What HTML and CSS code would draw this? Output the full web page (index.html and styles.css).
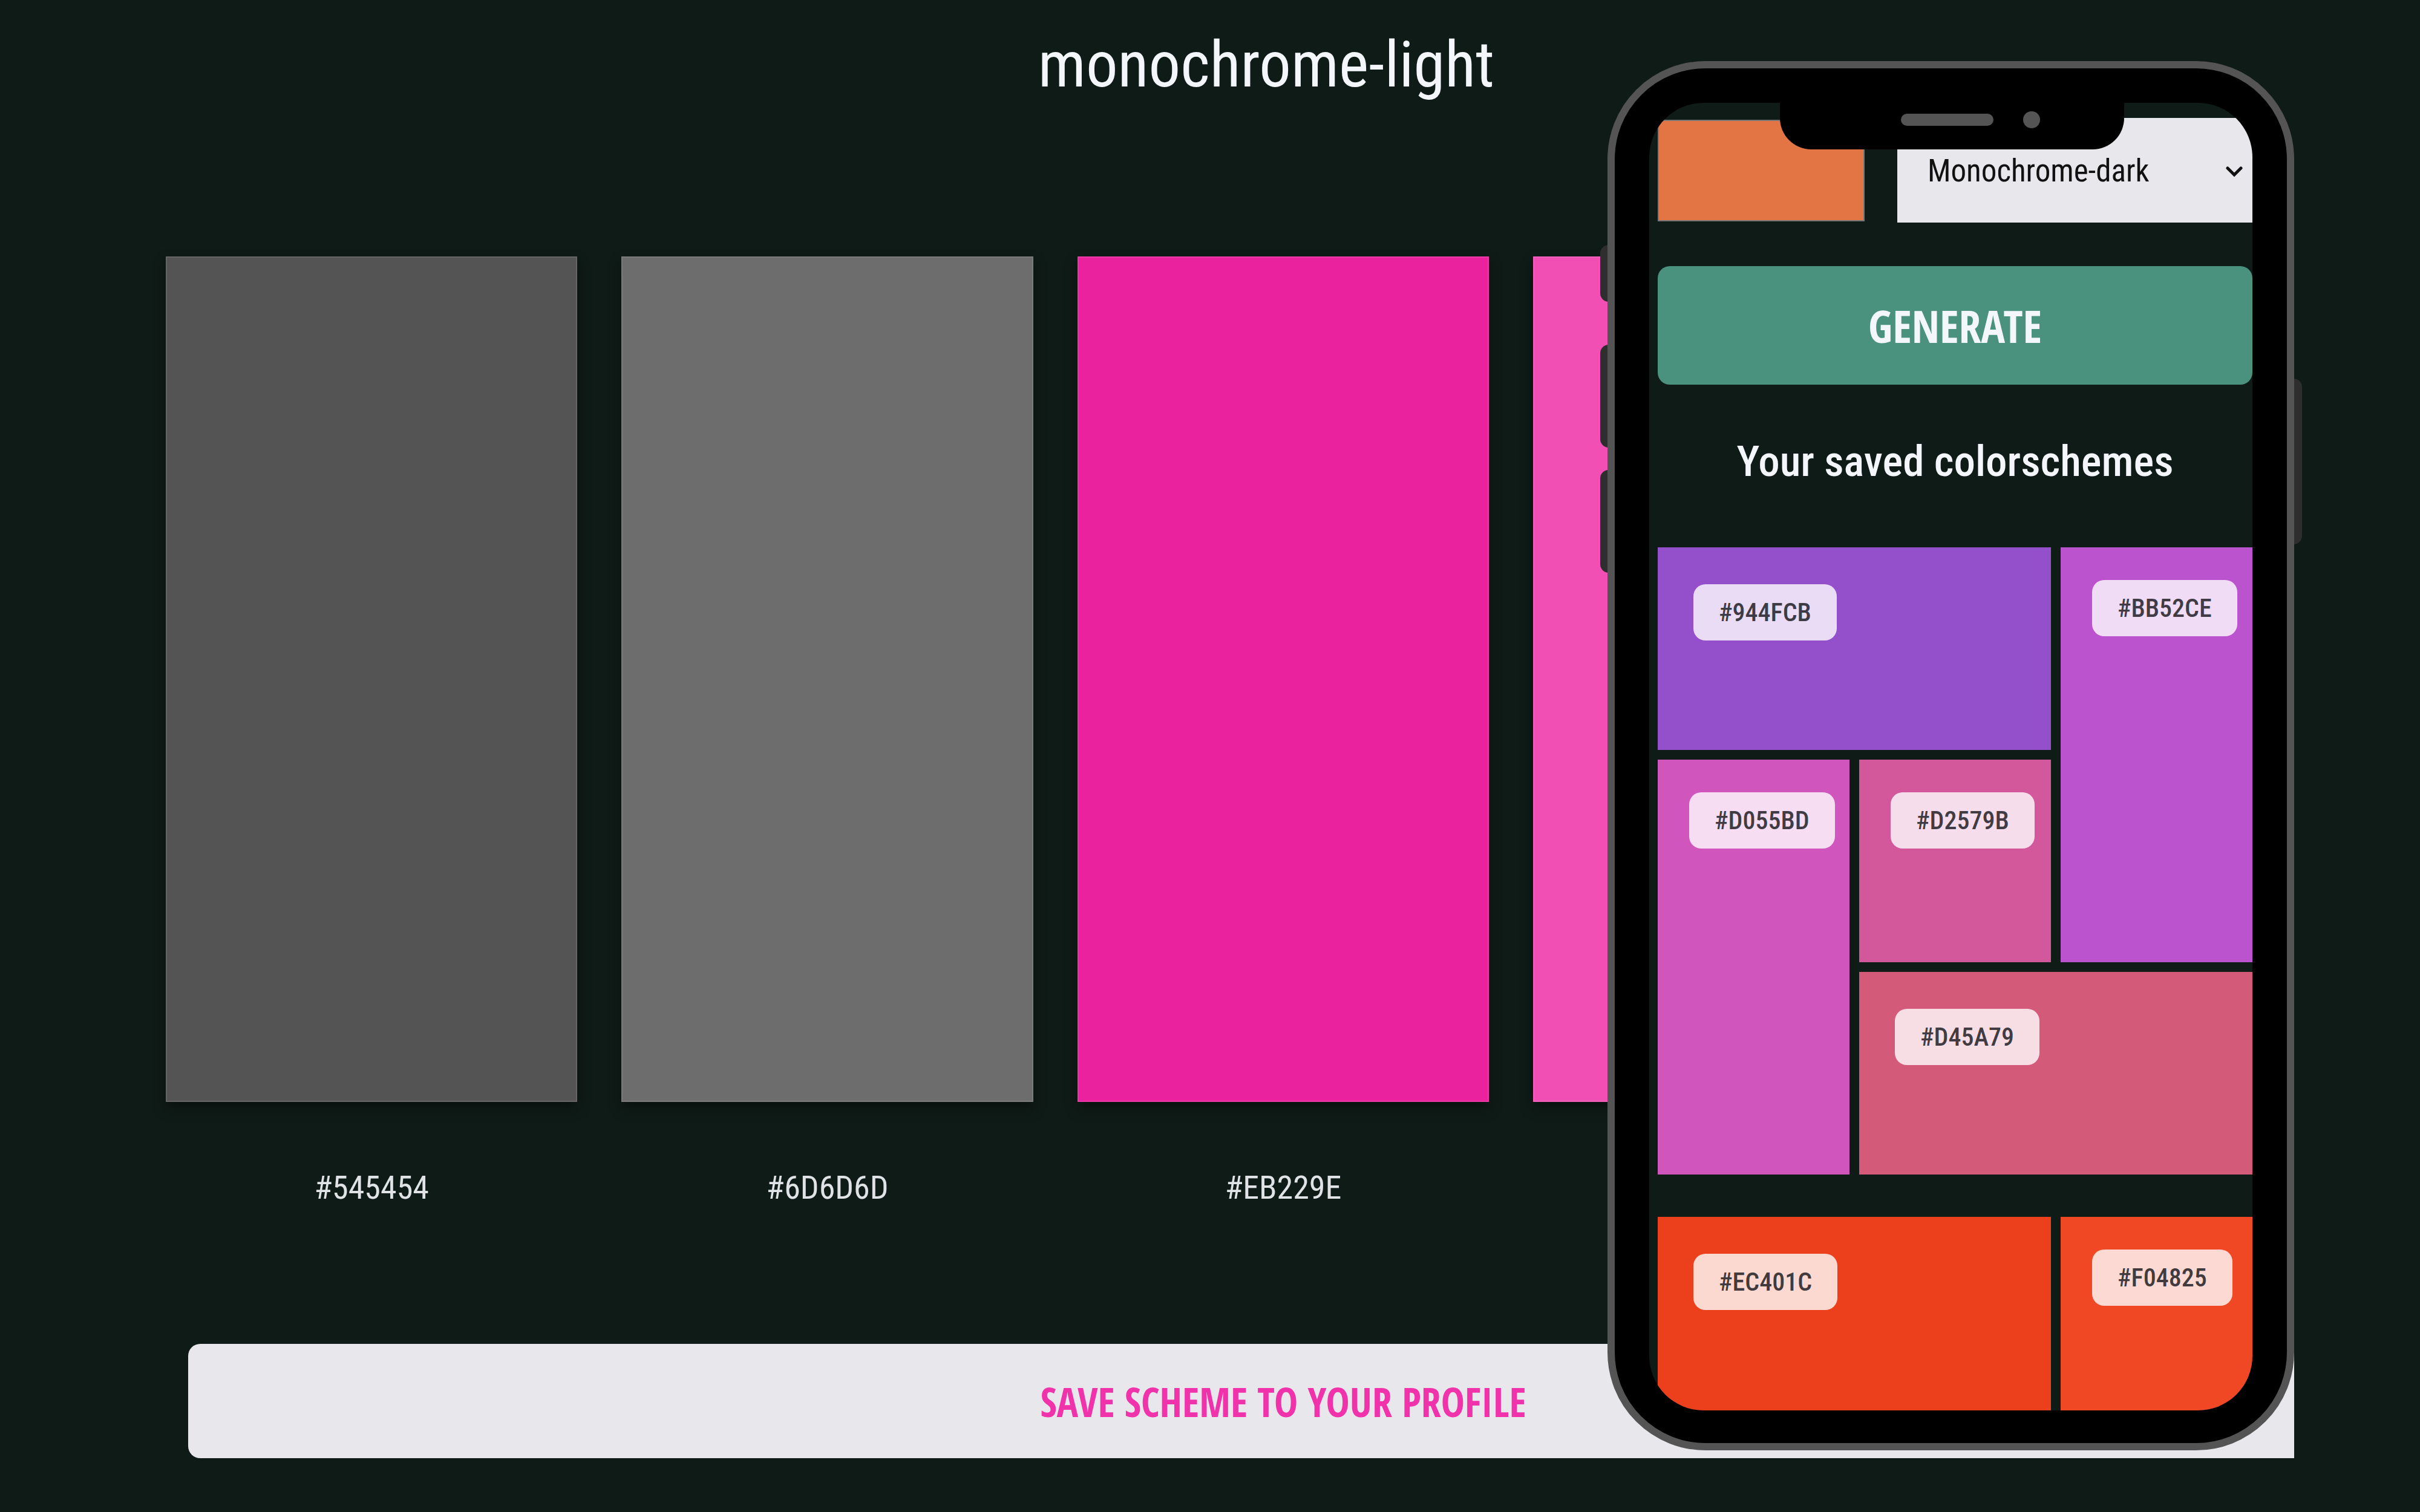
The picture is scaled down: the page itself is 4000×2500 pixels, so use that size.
FILE: index.html
```html
<!DOCTYPE html>
<html lang="en">
<head>
  <meta charset="utf-8">
  <meta name="viewport" content="width=device-width, initial-scale=1">
  <title>Color schemes</title>
  <link rel="stylesheet" href="styles.css">
</head>
<body>
  <div class="showcase">
    <main class="desktop">
      <div class="desktop-page">
        <h1 class="scheme-title">monochrome-light</h1>
        <ul class="swatches">
          <li class="swatch"><div class="swatch-color gray-dark"></div><p class="swatch-code">#545454</p></li>
          <li class="swatch"><div class="swatch-color gray-mid"></div><p class="swatch-code">#6D6D6D</p></li>
          <li class="swatch"><div class="swatch-color pink-deep"></div><p class="swatch-code">#EB229E</p></li>
          <li class="swatch"><div class="swatch-color pink-light"></div></li>
        </ul>
        <button class="save-button" type="button">SAVE SCHEME TO YOUR PROFILE</button>
      </div>
    </main>

    <aside class="phone">
      <span class="side-key key-mute"></span>
      <span class="side-key key-up"></span>
      <span class="side-key key-down"></span>
      <span class="side-key key-power"></span>
      <div class="phone-body">
        <div class="screen">
          <form class="generator">
            <div class="controls">
              <input class="color-input" type="color" value="#e37545" aria-label="Seed color">
              <div class="mode">
                <select class="mode-select" aria-label="Scheme mode"><option>Monochrome-dark</option></select>
                <svg class="chevron" viewBox="0 0 28 18" aria-hidden="true"><path d="M3 3l11 11L25 3" fill="none" stroke="#111" stroke-width="5" stroke-linecap="round"/></svg>
              </div>
            </div>
            <button class="generate-button" type="button">GENERATE</button>
          </form>
          <h2 class="saved-title">Your saved colorschemes</h2>
          <div class="saved">
            <div class="scheme">
              <div class="tile wide violet"><span class="chip">#944FCB</span></div>
              <div class="tile tall orchid"><span class="chip">#BB52CE</span></div>
              <div class="tile tall magenta"><span class="chip">#D055BD</span></div>
              <div class="tile rose"><span class="chip">#D2579B</span></div>
              <div class="tile wide coral"><span class="chip">#D45A79</span></div>
            </div>
            <div class="scheme">
              <div class="tile wide red"><span class="chip">#EC401C</span></div>
              <div class="tile tall orange"><span class="chip">#F04825</span></div>
            </div>
          </div>
        </div>
        <div class="notch"><span class="speaker"></span><span class="camera"></span></div>
      </div>
    </aside>
  </div>
</body>
</html>
```
FILE: styles.css
```css
* {
  box-sizing: border-box;
}

body {
  margin: 0;
  background: #0f1b17;
  color: #f3f6fb;
  font-family: "Roboto Condensed", Roboto, sans-serif;
}

h1, h2, p, ul {
  margin: 0;
  padding: 0;
  font-weight: 400;
}

button {
  font-family: "Open Sans Condensed", "Roboto Condensed", sans-serif;
  font-weight: 700;
}

select {
  font-family: inherit;
}

.showcase {
  position: relative;
  min-height: 100vh;
  overflow: hidden;
}

/* Desktop view, cut off at the right edge of the phone */
.desktop {
  margin-right: 208px;
  overflow: hidden;
}

.desktop-page {
  margin: 0 -176px 0 274px;
  padding: 48px 0 89px;
}

.scheme-title {
  padding-right: 56px;
  font-size: 105px;
  line-height: 120px;
  text-align: center;
}

.swatches {
  display: grid;
  grid-template-columns: repeat(5, 1fr);
  gap: 73px;
  margin-top: 256px;
  list-style: none;
}

.swatch-color {
  height: 1398px;
  border: 2px solid rgba(255, 255, 255, 0.1);
  box-shadow: 0 10px 20px rgba(0, 0, 0, 0.4);
}

.gray-dark { background: #545454; }
.gray-mid { background: #6d6d6d; }
.pink-deep { background: #eb229e; }
.pink-light { background: #f14fb4; }

.swatch-code {
  margin-top: 110px;
  color: #dfe3e6;
  font-size: 54px;
  line-height: 64px;
  text-align: center;
}

.save-button {
  display: block;
  width: calc(100% - 74px);
  height: 189px;
  margin: 226px auto 0;
  border: 0;
  border-radius: 20px;
  background: #e8e8ec;
  color: #f033ab;
  font-size: 66px;
}

/* Phone */
.phone {
  position: absolute;
  top: 101px;
  right: 208px;
  width: 1135px;
}

.phone-body {
  position: relative;
  padding: 57px 57px 54px;
  border: 12px solid #545454;
  border-radius: 162px;
  background: #000;
}

.side-key {
  position: absolute;
  left: -12px;
  width: 30px;
  height: 170px;
  border-radius: 14px;
  background: #2e2e2e;
}

.key-mute { top: 304px; height: 94px; }
.key-up { top: 469px; }
.key-down { top: 676px; }
.key-power { top: 525px; right: -13px; left: auto; height: 274px; }

.screen {
  height: 2162px;
  padding: 25px 0 0 14px;
  border-radius: 90px;
  overflow: hidden;
  background: #0f1b17;
}

.notch {
  position: absolute;
  top: 56px;
  left: 273px;
  display: flex;
  align-items: center;
  gap: 49px;
  width: 569px;
  height: 78px;
  padding: 0 0 20px 200px;
  border-radius: 0 0 52px 52px;
  background: #000;
}

.speaker {
  width: 153px;
  height: 20px;
  border-radius: 10px;
  background: #545454;
}

.camera {
  width: 28px;
  height: 28px;
  border-radius: 50%;
  background: #545454;
}

.controls {
  display: flex;
  align-items: center;
  gap: 54px;
}

.color-input {
  width: 342px;
  height: 168px;
  padding: 0;
  border: 2px solid #767676;
  background: #e37545;
  appearance: none;
}

.color-input::-webkit-color-swatch-wrapper { padding: 0; }
.color-input::-webkit-color-swatch { border: 0; }

.mode {
  position: relative;
  flex: 1;
}

.mode-select {
  display: block;
  width: 100%;
  height: 173px;
  padding: 2px 50px 0;
  border: 0;
  border-radius: 0;
  background: #e8e8ec;
  color: #111;
  font-size: 51px;
  appearance: none;
}

.chevron {
  position: absolute;
  top: 80px;
  right: 16px;
  width: 28px;
  height: 18px;
}

.generate-button {
  display: block;
  width: 100%;
  height: 196px;
  margin-top: 72px;
  border: 0;
  border-radius: 20px;
  background: #4b927e;
  color: #f3f6fb;
  font-size: 74px;
}

.saved-title {
  margin: 87px 0 102px;
  font-size: 71px;
  font-weight: 500;
  line-height: 80px;
  text-align: center;
}

.saved {
  display: grid;
  gap: 70px;
}

.scheme {
  display: grid;
  grid-template-columns: repeat(3, minmax(0, 1fr));
  grid-auto-rows: 335px;
  gap: 16px;
}

.tile { padding: 54px 52px; }
.wide { grid-column: span 2; padding: 61px 59px; }
.tall { grid-row: span 2; }

.violet { background: #944fcb; }
.orchid { background: #bb52ce; }
.magenta { background: #d055bd; }
.rose { background: #d2579b; }
.coral { background: #d45a79; }
.red { background: #ec401c; }
.orange { background: #f04825; }

.chip {
  display: inline-block;
  padding: 0 42px;
  border-radius: 20px;
  background: rgba(255, 255, 255, 0.8);
  color: rgba(15, 15, 20, 0.8);
  font-size: 42px;
  font-weight: 500;
  line-height: 93px;
}
```
